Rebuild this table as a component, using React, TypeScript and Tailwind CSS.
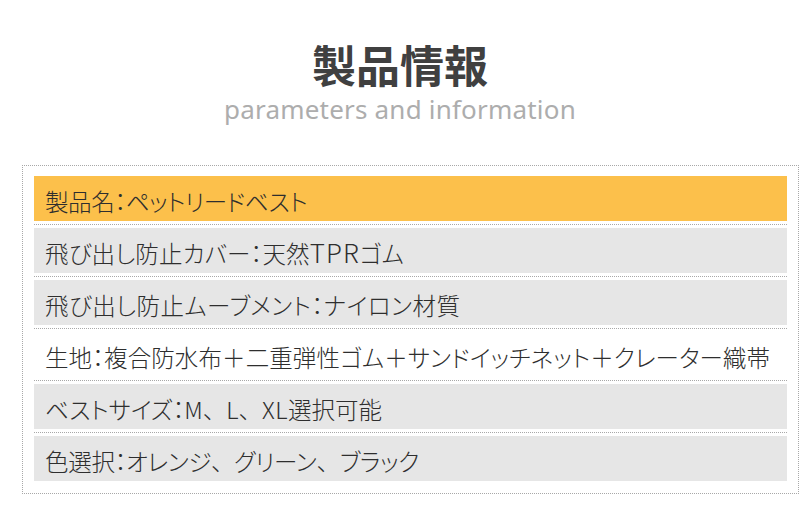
import React from "react";

const Comma = () => <span style={{ fontFeatureSettings: "normal" }}>、</span>;

const rows: { text: React.ReactNode; bg: string; track: string }[] = [
  { text: "製品名：ペットリードベスト", bg: "bg-[#fcc04b]", track: "tracking-[-0.4px]" },
  {
    text: (
      <>
        飛び出し防止カバー：天然<span className="text-[26px] leading-none tracking-[1px]">TPR</span>ゴム
      </>
    ),
    bg: "bg-[#e6e6e6]",
    track: "tracking-[0.2px]",
  },
  { text: "飛び出し防止ムーブメント：ナイロン材質", bg: "bg-[#e6e6e6]", track: "tracking-[0.5px]" },
  {
    text: "生地：複合防水布＋二重弾性ゴム＋サンドイッチネット＋クレーター織帯",
    bg: "bg-white",
    track: "tracking-[0.1px]",
  },
  {
    text: (
      <>
        ベストサイズ：M<Comma />L<Comma />
        <span className="tracking-[0.5px]">XL</span>選択可能
      </>
    ),
    bg: "bg-[#e6e6e6]",
    track: "tracking-[0px]",
  },
  {
    text: (
      <>
        色選択：オレンジ<Comma />グリーン<Comma />ブラック
      </>
    ),
    bg: "bg-[#e6e6e6]",
    track: "tracking-[-0.3px]",
  },
];

export default function App() {
  return (
    <div className="w-[800px] h-[512px] bg-white overflow-hidden flex flex-col items-center">
      <div
        className="mt-[36px] text-[44px] leading-[56px] font-bold text-[#404040]"
        style={{ fontFamily: '"Noto Sans CJK SC", "Noto Sans CJK JP", sans-serif' }}
      >
        製品情報
      </div>
      <div
        className="mt-[1px] text-[26px] leading-[32px] text-[#adadad] tracking-[0.2px]"
        style={{ fontFamily: '"Noto Sans", sans-serif' }}
      >
        parameters and information
      </div>
      <div className="mt-[40px] ml-[22px] self-start w-[777px] border border-dotted border-[#a8a8a8] px-[11px] pt-[10px] pb-[12px] flex flex-col">
        {rows.map((r, i) => (
          <React.Fragment key={i}>
            {i > 0 && <div className="my-[3px] border-t border-dotted border-[#a8a8a8]" />}
            <div
              className={`h-[45px] ${r.bg} ${r.track} flex items-center pl-[11px] pt-[6px] text-[23.5px] text-[#2e2e2e] whitespace-nowrap`}
              style={{ fontFamily: '"Noto Sans CJK JP", sans-serif', fontWeight: 300, fontFeatureSettings: '"palt"' }}
            >
              <span>{r.text}</span>
            </div>
          </React.Fragment>
        ))}
      </div>
    </div>
  );
}
